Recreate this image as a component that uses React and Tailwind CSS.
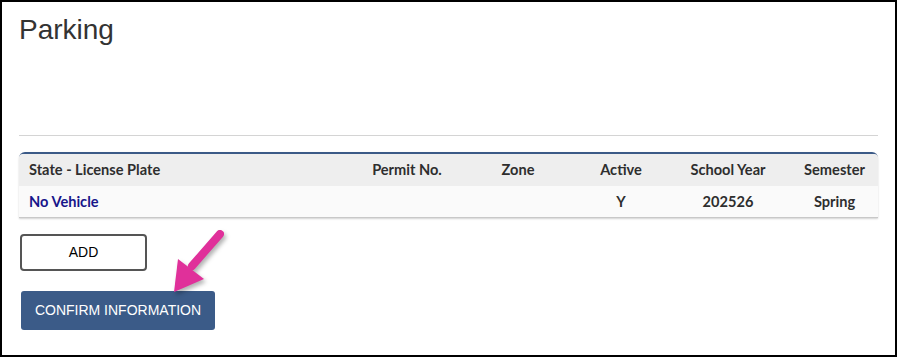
export default function App() {
  const cols = [
    { label: 'Permit No.', value: '' },
    { label: 'Zone', value: '' },
    { label: 'Active', value: 'Y' },
    { label: 'School Year', value: '202526' },
    { label: 'Semester', value: 'Spring' },
  ];

  return (
    <div className="relative w-[897px] h-[357px] border-2 border-black bg-white overflow-hidden">
      <div className="pl-[17px] pr-[17px]">
        <h1 className="pt-[11px] text-[28px] leading-[34px] text-[#333] font-['Liberation_Sans',Arial,sans-serif]">
          Parking
        </h1>

        <div className="mt-[88px] border-t border-[#d4d4d4]" />

        {/* vehicle table */}
        <div className="mt-[16px] rounded-t-[6px] border-t-2 border-[#3b5a87] shadow-[0_1px_2px_rgba(0,0,0,0.18)] font-['Lato',sans-serif] font-bold text-[14.6px] text-[#2e2e2e]">
          <div className="grid grid-cols-[336px_104px_118px_88px_126px_1fr] h-[32px] items-center bg-[#eeeeee] rounded-t-[4px]">
            <div className="pl-[10px]">State - License Plate</div>
            {cols.map((c) => (
              <div key={c.label} className="text-center">{c.label}</div>
            ))}
          </div>
          <div className="grid grid-cols-[336px_104px_118px_88px_126px_1fr] h-[32px] items-center bg-[#fafafa] border-b border-[#c8c8c8]">
            <div className="pl-[10px] text-[#17158a]">No Vehicle</div>
            {cols.map((c) => (
              <div key={c.label} className="text-center">{c.value}</div>
            ))}
          </div>
        </div>

        <div className="flex flex-col items-start font-['Liberation_Sans',Arial,sans-serif] text-[14px]">
          <button className="mt-[16px] ml-[1px] w-[127px] h-[37px] rounded-[4px] border-2 border-[#555] bg-white text-black">
            ADD
          </button>
          <button className="mt-[20px] ml-[2px] w-[194px] h-[39px] rounded-[3px] bg-[#3b5b88] text-white">
            CONFIRM INFORMATION
          </button>
        </div>
      </div>

      {/* callout arrow */}
      <svg
        className="absolute left-[160px] top-[222px] drop-shadow-[2px_3px_2px_rgba(0,0,0,0.3)]"
        width="75"
        height="75"
        viewBox="0 0 75 75"
      >
        <line x1="58" y1="10" x2="30" y2="42" stroke="#e0309a" strokeWidth="8" strokeLinecap="round" />
        <polygon points="16,35 42,55 12,68" fill="#e0309a" />
      </svg>
    </div>
  );
}
